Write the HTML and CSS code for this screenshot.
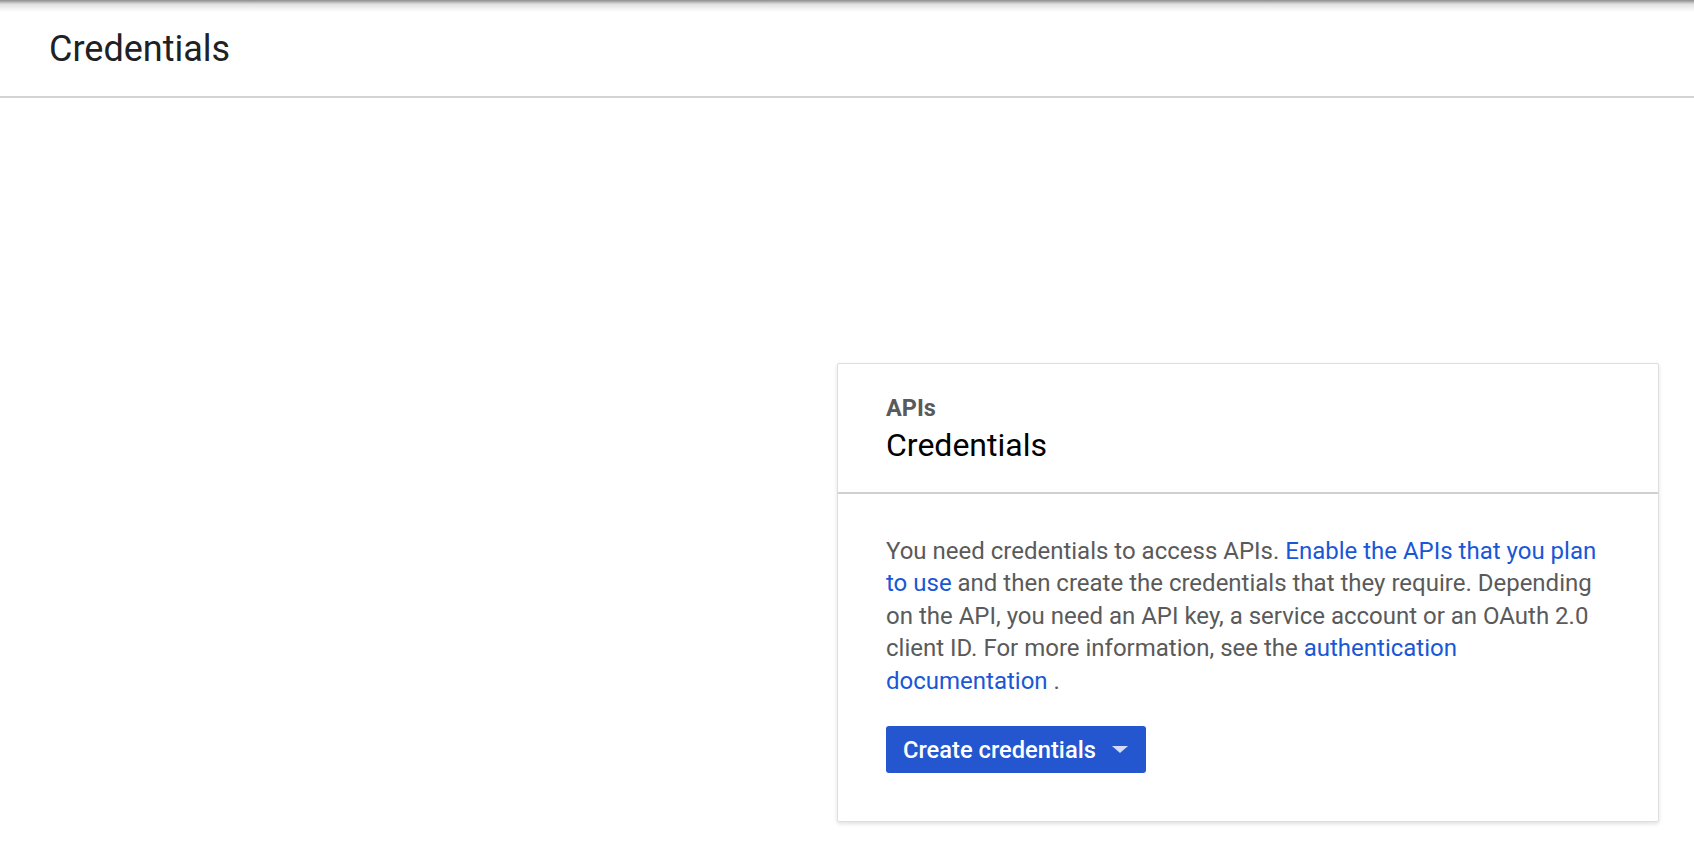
FILE: index.html
```html
<!DOCTYPE html>
<html>
<head>
<meta charset="utf-8">
<link rel="stylesheet" href="styles.css">
</head>
<body>
<div class="topshadow"></div>
<header class="page-header">
  <h1 class="page-title">Credentials</h1>
</header>
<main class="content">
  <section class="card">
    <div class="card-head">
      <div class="eyebrow">APIs</div>
      <h2 class="card-title">Credentials</h2>
    </div>
    <div class="card-body">
      <p class="desc">You need credentials to access APIs. <a href="#">Enable the APIs that you plan to use</a> and then create the credentials that they require. Depending on the API, you need an API key, a service account or an OAuth 2.0 client ID. For more information, see the <a href="#">authentication documentation</a> .</p>
      <button class="btn">Create credentials <span class="caret"></span></button>
    </div>
  </section>
</main>
</body>
</html>
```

FILE: styles.css
```css
html, body {
  margin: 0;
  padding: 0;
  background: #ffffff;
  font-family: Roboto, "Liberation Sans", Arial, sans-serif;
}
body {
  position: relative;
  width: 1694px;
  height: 842px;
  overflow: hidden;
}
.topshadow {
  position: absolute;
  top: 0;
  left: 0;
  right: 0;
  height: 12px;
  background: linear-gradient(to bottom, rgba(0,0,0,0.45), rgba(0,0,0,0.12) 35%, rgba(0,0,0,0));
  pointer-events: none;
}
.page-header {
  height: 96px;
  border-bottom: 2px solid #d4d4d4;
  box-sizing: content-box;
  padding: 0 49px;
}
.page-title {
  margin: 0;
  padding-top: 25px;
  font-size: 36px;
  line-height: 48px;
  font-weight: 400;
  color: #202124;
}
.content {
  display: flex;
  justify-content: flex-end;
  padding: 265px 35px 0 0;
}
.card {
  width: 822px;
  box-sizing: border-box;
  border: 1px solid #dedede;
  border-radius: 2px;
  box-shadow: 0 2px 4px rgba(0,0,0,0.12);
  background: #fff;
}
.card-head {
  padding: 30px 48px 27px;
  border-bottom: 2px solid #d0d0d0;
}
.eyebrow {
  font-size: 23.5px;
  line-height: 28px;
  font-weight: 700;
  color: #5a5a5a;
}
.card-title {
  margin: 3px 0 0;
  font-size: 32px;
  line-height: 40px;
  font-weight: 400;
  color: #000;
}
.card-body {
  padding: 41px 48px 48px;
}
.desc {
  margin: 0;
  font-size: 24px;
  line-height: 32.4px;
  color: #5a5a5a;
}
.desc a {
  color: #1a57d6;
  text-decoration: none;
}
.btn {
  margin-top: 29px;
  display: inline-flex;
  align-items: center;
  height: 47px;
  width: 260px;
  padding: 0 0 0 17px;
  border: none;
  border-radius: 3px;
  background: #2356cf;
  color: #fff;
  font-family: Roboto, "Liberation Sans", Arial, sans-serif;
  font-size: 23.7px;
  font-weight: 500;
  cursor: pointer;
}
.caret {
  margin-left: 16px;
  width: 0;
  height: 0;
  border-left: 8px solid transparent;
  border-right: 8px solid transparent;
  border-top: 7px solid #d3dcf5;
}
```
